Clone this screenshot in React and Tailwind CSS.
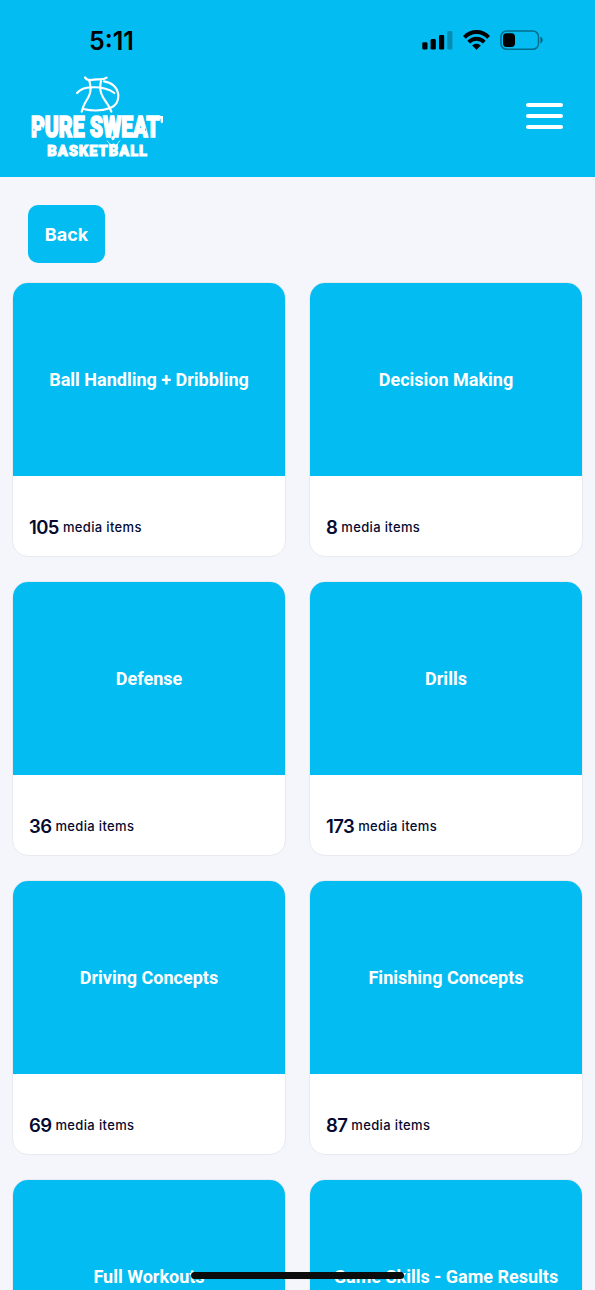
const folders = [
  { title: 'Ball Handling + Dribbling', count: 105 },
  { title: 'Decision Making', count: 8 },
  { title: 'Defense', count: 36 },
  { title: 'Drills', count: 173 },
  { title: 'Driving Concepts', count: 69 },
  { title: 'Finishing Concepts', count: 87 },
  { title: 'Full Workouts' },
  { title: 'Game Skills - Game Results' },
]

function SignalIcon() {
  return (
    <svg width="32" height="22" viewBox="0 0 32 22">
      <rect x="0.3" y="12.2" width="5.2" height="7.4" rx="1.4" />
      <rect x="8.6" y="9" width="5.2" height="10.6" rx="1.4" />
      <rect x="17" y="5" width="5.2" height="14.6" rx="1.4" />
      <rect x="25.2" y="1" width="5.2" height="18.6" rx="1.4" opacity="0.25" />
    </svg>
  )
}

function WifiIcon() {
  return (
    <svg width="28" height="22" viewBox="0 0 28 22" fill="none" stroke="#000" strokeWidth="3.8">
      <path d="M1.4 7.4 C8.2 0.2 18.8 0.2 25.6 7.4" />
      <path d="M5.7 12.1 C10.1 7.6 16.9 7.6 21.3 12.1" />
      <path d="M13.5 19.7 L9.2 15.6 C11.6 13.2 15.4 13.2 17.8 15.6 Z" fill="#000" stroke="none" />
    </svg>
  )
}

function BatteryIcon() {
  return (
    <svg width="44" height="22" viewBox="0 0 44 22">
      <rect x="0.9" y="0.9" width="37.6" height="18.4" rx="5.8" fill="none" stroke="#000" strokeOpacity="0.42" strokeWidth="1.5" />
      <rect x="3" y="3.3" width="12" height="13.6" rx="3.6" />
      <path d="M40.4 6.8 C43.5 7.8 43.5 12.4 40.4 13.4 Z" opacity="0.45" />
    </svg>
  )
}

function Logo() {
  return (
    <svg width="155" height="100" viewBox="0 0 465 300" fill="#fff" className="overflow-visible">
      <g fill="none" stroke="#fff" strokeWidth="6.5" strokeLinecap="round">
        <path d="M195 34 C201 44 209 44 221 41 C235 38 248 44 260 35" />
        <path d="M208 45 C218 77 206 94 195 111 C190 119 188 128 185 137" />
        <path d="M243 45 C235 80 250 96 261 112 C268 121 271 129 274 137" />
        <path d="M171 81 C183 67 199 64 214 64 C235 63 263 66 283 81" />
        <path d="M252 46 C278 50 294 67 295 89 C295 108 285 120 271 126 C246 135 216 135 190 129" />
      </g>
      <text
        transform="translate(33 213) scale(0.76 1)" textLength="508" lengthAdjust="spacingAndGlyphs"
        className="font-['Roboto',sans-serif] text-[88px] font-black" stroke="#fff" strokeWidth="5"
      >
        PURE SWEAT
      </text>
      <path d="M416 150 H429 V168 Q425 176 422 168 V158 H416 Z M274 211 H284 V219 Q279 226 274 219 Z" />
      <g fill="#03bcf1">
        <path d="M66 181 Q61 190 66 192 Q71 190 66 181 M42 187 Q38 194 42 195 Q46 194 42 187 M98 181 Q94 189 98 191 Q102 189 98 181" />
        <path d="M377 186 Q373 193 377 195 Q381 193 377 186" />
      </g>
      <text
        x="82" y="271" textLength="299" lengthAdjust="spacing"
        className="font-['Roboto',sans-serif] text-[44px] font-black" stroke="#fff" strokeWidth="3"
      >
        BASKETBALL
      </text>
      <path d="M270 242 L266 231 L276 235 L281 232 L286 236 L295 231 L292 242 Z" />
      <path d="M267 230 L261 225 M294 230 L300 225" fill="none" stroke="#fff" strokeWidth="2.5" strokeLinecap="round" />
    </svg>
  )
}

function StatusBar() {
  return (
    <div className="flex h-[66px] items-start justify-between pl-[89px] pr-[51px] pt-[26px]">
      <span className="font-['Inter',sans-serif] text-[25px] font-semibold leading-[30px] text-black">5:11</span>
      <div className="flex pt-1">
        <SignalIcon />
        <div className="ml-[9px]"><WifiIcon /></div>
        <div className="ml-[9px]"><BatteryIcon /></div>
      </div>
    </div>
  )
}

function FolderCard({ title, count }) {
  return (
    <article className="flex h-[275px] flex-col overflow-hidden rounded-[16px] border border-[#e9eaf0] bg-white">
      <div className="flex h-[193px] shrink-0 items-center justify-center bg-[#03bcf1]">
        <h3 className="whitespace-nowrap font-['Roboto',sans-serif] text-[18px] font-bold leading-6 text-white">{title}</h3>
      </div>
      {count ? (
        <p className="flex items-center gap-1 pl-4 pt-[37px] font-['Inter',sans-serif] text-[#050a30]">
          <span className="text-[18.5px] font-semibold leading-7 tracking-[-0.6px]">{count}</span>
          <span className="text-[13px] font-medium leading-7 tracking-[0.35px]">media items</span>
        </p>
      ) : null}
    </article>
  )
}

export default function App() {
  return (
    <div className="relative h-[1290px] w-[595px] overflow-hidden bg-[#f4f6fb]">
      <header className="h-[177px] bg-[#03bcf1]">
        <StatusBar />
        <div className="flex items-start justify-between pl-5 pr-8">
          <Logo />
          <button type="button" aria-label="Menu" className="mt-[37px] flex w-[37px] flex-col gap-[7px]">
            <span className="h-1 rounded-full bg-white" />
            <span className="h-1 rounded-full bg-white" />
            <span className="h-1 rounded-full bg-white" />
          </button>
        </div>
      </header>

      <main className="px-3 pt-7">
        <button type="button" className="ml-4 flex h-[58px] w-[77px] items-center justify-center rounded-[10px] bg-[#03bcf1] font-['Inter',sans-serif] text-[18px] font-bold text-white">
          Back
        </button>
        <div className="mt-[19px] grid grid-cols-[274px_274px] gap-x-[23px] gap-y-6">
          {folders.map((folder) => (
            <FolderCard key={folder.title} title={folder.title} count={folder.count} />
          ))}
        </div>
      </main>

      <div className="absolute bottom-[11px] left-[191px] h-[7px] w-[213px] rounded-full bg-[#0c0c0c]" />
    </div>
  )
}
